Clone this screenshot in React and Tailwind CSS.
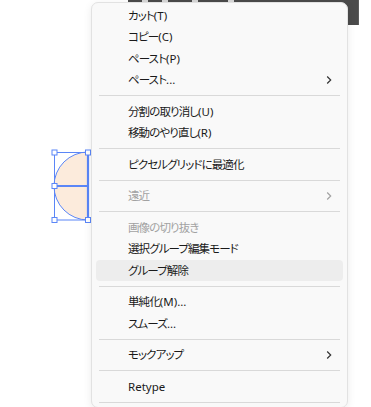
import React from 'react';

const items = [
  { label: 'カット(T)' },
  { label: 'コピー(C)' },
  { label: 'ペースト(P)' },
  { label: 'ペースト...', sub: true },
  { sep: true },
  { label: '分割の取り消し(U)' },
  { label: '移動のやり直し(R)' },
  { sep: true },
  { label: 'ピクセルグリッドに最適化' },
  { sep: true },
  { label: '遠近', sub: true, disabled: true },
  { sep: true },
  { label: '画像の切り抜き', disabled: true },
  { label: '選択グループ編集モード' },
  { label: 'グループ解除', active: true },
  { sep: true },
  { label: '単純化(M)...' },
  { label: 'スムーズ...' },
  { sep: true },
  { label: 'モックアップ', sub: true },
  { sep: true },
  { label: 'Retype' },
  { sep: true },
];

// japanese runs get tighter tracking, latin runs keep normal spacing
function Label({ text }) {
  const parts = text.split(/([\u3000-\u30ff\u4e00-\u9fff\uff00-\uffef]+)/).filter(Boolean);
  return (
    <span>
      {parts.map((p, i) =>
        /[\u3000-\u30ff\u4e00-\u9fff\uff00-\uffef]/.test(p) ? (
          <span key={i} className="tracking-[-0.9px]">{p}</span>
        ) : (
          <span key={i} className="tracking-normal">{p}</span>
        )
      )}
    </span>
  );
}

function Chevron({ color }) {
  return (
    <svg width="6" height="10" viewBox="0 0 6 10" className="absolute right-[11px]">
      <path d="M1.2 1.5 L4.7 5 L1.2 8.5" fill="none" stroke={color} strokeWidth="1.2" />
    </svg>
  );
}

function MenuItem({ item }) {
  if (item.sep) {
    return (
      <div className="h-[10px] flex items-center px-[3px]">
        <div className="h-px w-full bg-[#d9d9d9]" />
      </div>
    );
  }
  return (
    <div
      className={`relative h-[21.5px] flex items-center pl-[32px] rounded-[4px] ${
        item.active ? 'bg-[#ededed]' : ''
      } ${item.disabled ? 'text-[#a2a2a2]' : 'text-[#1a1a1a]'}`}
    >
      <Label text={item.label} />
      {item.sub && <Chevron color={item.disabled ? '#a2a2a2' : '#333333'} />}
    </div>
  );
}

export default function App() {
  return (
    <div className="relative w-[371px] h-[407px] overflow-hidden bg-white">
      {/* dark artboard strip behind the menu */}
      <div className="absolute left-[128px] top-0 w-[231px] h-[25px] bg-[#4b4b4b] border-r border-[#5c5c5c]">
        <div className="flex h-[2px]">
          <div className="w-[14px] bg-[#4b4b4b]" />
          <div className="w-[6px] bg-[#d8d8d8]" />
          <div className="w-[14px] bg-[#4b4b4b]" />
          <div className="w-[6px] bg-[#d8d8d8]" />
          <div className="w-[24px] bg-[#4b4b4b]" />
          <div className="w-[6px] bg-[#d8d8d8]" />
          <div className="w-[30px] bg-[#4b4b4b]" />
          <div className="w-[6px] bg-[#d8d8d8]" />
        </div>
      </div>

      {/* selected half-circle object on the canvas */}
      <svg className="absolute left-[50px] top-[148px]" width="42" height="76" viewBox="0 0 42 76">
        <path d="M38 4 A34 34 0 0 0 38 72 Z" fill="#fcebdc" stroke="#5b86f7" strokeWidth="1" />
        <line x1="38" y1="4" x2="38" y2="72" stroke="#5b86f7" strokeWidth="2.2" />
        <line x1="4" y1="38" x2="38" y2="38" stroke="#5b86f7" strokeWidth="2" />
        <rect x="4.5" y="4.5" width="33.5" height="67.5" fill="none" stroke="#5b86f7" strokeWidth="1" />
        {[
          [4.5, 4.5],
          [38, 4.5],
          [4.5, 38],
          [4.5, 72],
          [38, 72],
        ].map(([x, y], i) => (
          <rect key={i} x={x - 2.5} y={y - 2.5} width="5" height="5" fill="white" stroke="#5b86f7" strokeWidth="1" />
        ))}
      </svg>

      {/* context menu */}
      <div
        className="absolute left-[91px] top-[2px] w-[257px] rounded-[7px] border border-[#e2e2e2] bg-[#f9f9f9] shadow-[0_2px_8px_rgba(0,0,0,0.08)] px-[4px] pt-[1.5px] text-[11.5px] leading-none"
        style={{ fontFamily: '"Noto Sans", "Noto Sans CJK JP", sans-serif', fontFeatureSettings: '"palt"' }}
      >
        {items.map((item, i) => (
          <MenuItem key={i} item={item} />
        ))}
      </div>
    </div>
  );
}
